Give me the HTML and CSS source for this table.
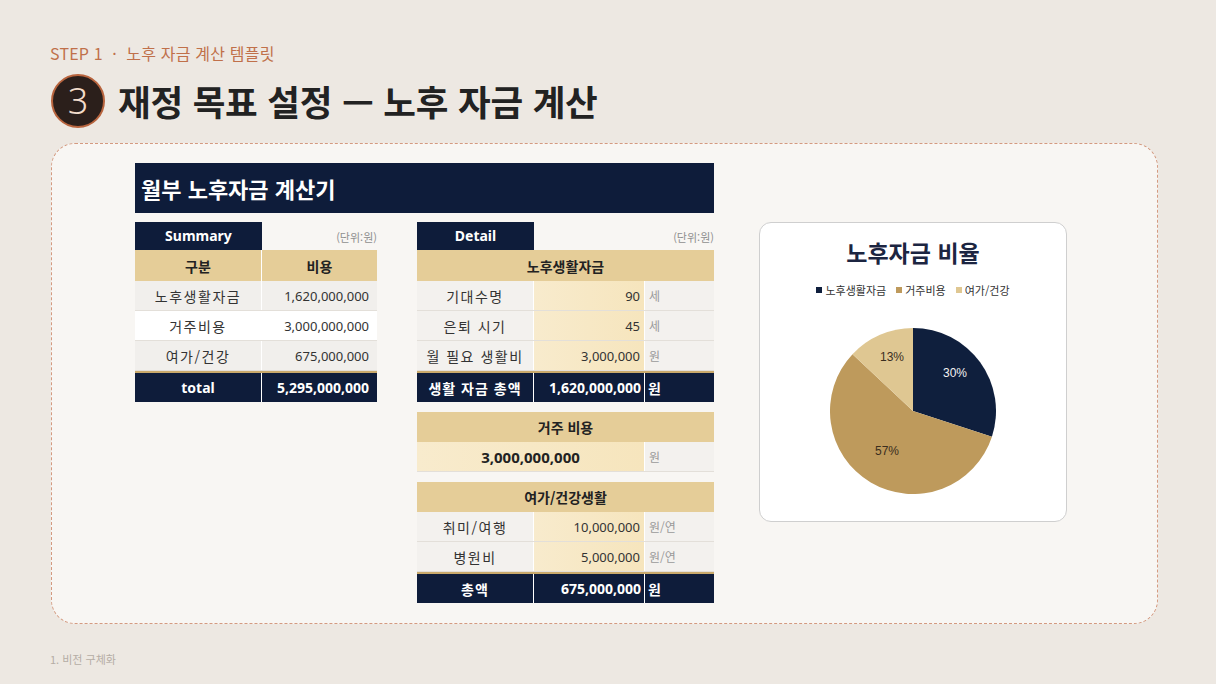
FILE: index.html
```html
<!DOCTYPE html>
<html lang="ko">
<head>
<meta charset="utf-8">
<title>노후 자금 계산</title>
<link rel="stylesheet" href="styles.css">
</head>
<body>
<div class="page">
  <div class="step">STEP 1 &nbsp;·&nbsp; 노후 자금 계산 템플릿</div>
  <div class="title-row">
    <div class="circle">3</div>
    <h1 class="title">재정 목표 설정 — 노후 자금 계산</h1>
  </div>

  <div class="card">
    <div class="left">
      <div class="calc-title">월부 노후자금 계산기</div>
      <div class="tables">
        <div class="summary">
          <div class="tab-row"><div class="tab">Summary</div><div class="unit-note">(단위:원)</div></div>
          <div class="s-grid s-head"><div>구분</div><div>비용</div></div>
          <div class="s-grid s-row odd"><div class="lbl">노후생활자금</div><div class="val">1,620,000,000</div></div>
          <div class="s-grid s-row even"><div class="lbl">거주비용</div><div class="val">3,000,000,000</div></div>
          <div class="s-grid s-row odd"><div class="lbl">여가/건강</div><div class="val">675,000,000</div></div>
          <div class="s-grid s-total"><div>total</div><div class="val">5,295,000,000</div></div>
        </div>

        <div class="detail">
          <div class="tab-row"><div class="tab">Detail</div><div class="unit-note">(단위:원)</div></div>
          <div class="block">
            <div class="d-head first">노후생활자금</div>
            <div class="d-grid d-row"><div class="lbl">기대수명</div><div class="val">90</div><div class="unit">세</div></div>
            <div class="d-grid d-row"><div class="lbl">은퇴 시기</div><div class="val">45</div><div class="unit">세</div></div>
            <div class="d-grid d-row"><div class="lbl">월 필요 생활비</div><div class="val">3,000,000</div><div class="unit">원</div></div>
            <div class="d-grid d-total"><div class="lbl">생활 자금 총액</div><div class="val">1,620,000,000</div><div class="unit">원</div></div>
          </div>
          <div class="block">
            <div class="d-head">거주 비용</div>
            <div class="d-grid2 d-row"><div class="val big">3,000,000,000</div><div class="unit">원</div></div>
          </div>
          <div class="block">
            <div class="d-head">여가/건강생활</div>
            <div class="d-grid d-row"><div class="lbl">취미/여행</div><div class="val">10,000,000</div><div class="unit">원/연</div></div>
            <div class="d-grid d-row"><div class="lbl">병원비</div><div class="val">5,000,000</div><div class="unit">원/연</div></div>
            <div class="d-grid d-total"><div class="lbl">총액</div><div class="val">675,000,000</div><div class="unit">원</div></div>
          </div>
        </div>
      </div>
    </div>

    <div class="chart">
      <div class="chart-title">노후자금 비율</div>
      <div class="legend">
        <span class="lg"><i class="m m1"></i>노후생활자금</span>
        <span class="lg"><i class="m m2"></i>거주비용</span>
        <span class="lg"><i class="m m3"></i>여가/건강</span>
      </div>
      <svg class="pie" width="166" height="166" viewBox="0 0 166 166">
        <path d="M83 83 L83 0 A83 83 0 0 1 161.94 108.65 Z" fill="#0f1f3d"/>
        <path d="M83 83 L161.94 108.65 A83 83 0 1 1 22.5 26.2 Z" fill="#be9a5c"/>
        <path d="M83 83 L22.5 26.2 A83 83 0 0 1 83 0 Z" fill="#dfc792"/>
        <text x="125" y="49" class="pl light" text-anchor="middle">30%</text>
        <text x="57" y="127" class="pl" text-anchor="middle">57%</text>
        <text x="62" y="33" class="pl" text-anchor="middle">13%</text>
      </svg>
    </div>
  </div>

  <div class="footer">1. 비전 구체화</div>
</div>
</body>
</html>
```

FILE: styles.css
```css
* { box-sizing: border-box; }
html, body { margin: 0; padding: 0; }
body {
  width: 1216px;
  height: 684px;
  overflow: hidden;
  background: #ede8e2;
  font-family: "Noto Sans", "Noto Sans CJK KR", sans-serif;
  color: #333;
}
.page { padding: 43px 58px 0 51px; }
.step {
  font-family: "Noto Sans CJK KR", sans-serif;
  font-size: 16px;
  line-height: 20px;
  color: #c0704a;
  margin-left: -1px;
  letter-spacing: 0.2px;
}
.title-row {
  display: flex;
  align-items: center;
  gap: 13px;
  margin-top: 11px;
  height: 54px;
}
.circle {
  width: 54px;
  height: 54px;
  border-radius: 50%;
  background: #2b1f1b;
  border: 2px solid #b8643e;
  color: #f3dccb;
  font-family: "Noto Sans", sans-serif;
  font-weight: 300;
  font-size: 36px;
  display: flex;
  align-items: center;
  justify-content: center;
  line-height: 1;
}
.title {
  margin: 0;
  font-family: "Noto Sans CJK KR", sans-serif;
  font-size: 35.5px;
  font-weight: 700;
  line-height: 54px;
  color: #222;
  letter-spacing: -0.2px;
}
.card {
  margin-top: 15px;
  height: 481px;
  border: 1px dashed #d49a80;
  border-radius: 24px;
  background: #f8f6f3;
  padding: 19px 0 0 83px;
  display: flex;
}
.left { width: 579px; }
.calc-title {
  height: 50px;
  background: #0e1c3a;
  color: #fff;
  font-family: "Noto Sans CJK KR", sans-serif;
  font-weight: 700;
  font-size: 22px;
  padding-left: 6px;
  display: flex;
  align-items: center;
}
.tables {
  display: flex;
  gap: 40px;
  margin-top: 9px;
}
.summary { width: 242px; }
.detail { width: 297px; }
.tab-row {
  display: flex;
  justify-content: space-between;
  align-items: center;
  height: 28px;
}
.tab {
  width: 127px;
  height: 28px;
  background: #0e1c3a;
  color: #fff;
  font-weight: 700;
  font-size: 14px;
  line-height: 28px;
  text-align: center;
}
.detail .tab { width: 117px; }
.unit-note {
  font-family: "Noto Sans CJK KR", sans-serif;
  font-size: 11px;
  color: #8f8f8f;
  padding-top: 2px;
}

/* summary */
.s-grid {
  display: grid;
  grid-template-columns: 127px 115px;
}
.s-grid > div {
  display: flex;
  align-items: center;
  justify-content: center;
}
.s-grid > div:first-child { border-right: 1px solid #fff; }
.s-head {
  height: 31px;
  background: #e5cd98;
  font-weight: 700;
  font-size: 14px;
  color: #222;
  font-family: "Noto Sans CJK KR", sans-serif;
}
.s-row {
  height: 30px;
  border-bottom: 1px solid #e3dfd9;
}
.s-row.odd { background: #f1efec; }
.s-row.even { background: #fff; }
.lbl {
  font-family: "Noto Sans CJK KR", sans-serif;
  font-size: 14px;
  letter-spacing: 1.5px;
  color: #333;
}
.s-grid > .val, .d-grid > .val {
  justify-content: flex-end;
  font-size: 13px;
  color: #333;
}
.s-grid > .val { padding-right: 8px; }
.s-total {
  height: 31px;
  background: #0e1c3a;
  border-top: 2px solid #c9a96b;
  color: #fff;
  font-weight: 700;
  font-size: 14px;
}
.s-total > .val, .d-total > .val { font-size: 14px !important; color: #fff !important; font-weight: 700; }

/* detail */
.block + .block { margin-top: 10px; }
.d-head {
  height: 30px;
  background: #e5cd98;
  font-family: "Noto Sans CJK KR", sans-serif;
  font-weight: 700;
  font-size: 14px;
  color: #222;
  display: flex;
  align-items: center;
  justify-content: center;
}
.d-head.first { height: 31px; }
.d-grid {
  display: grid;
  grid-template-columns: 117px 111px 69px;
}
.d-grid2 {
  display: grid;
  grid-template-columns: 228px 69px;
}
.d-grid > div, .d-grid2 > div {
  display: flex;
  align-items: center;
}
.d-row {
  height: 30px;
  border-bottom: 1px solid #e3dfd9;
}
.d-row .lbl {
  justify-content: center;
  background: #f3f1ee;
  border-right: 1px solid #fff;
}
.d-row .val {
  background: linear-gradient(90deg, #f8ebcd, #f6e5bd);
  padding-right: 4px;
  border-right: 1px solid #fff;
}
.d-row .unit {
  background: #f3f1ee;
  padding-left: 4px;
  font-family: "Noto Sans CJK KR", sans-serif;
  font-size: 12px;
  color: #9a9a9a;
}
.d-row .val.big {
  justify-content: center;
  font-weight: 700;
  font-size: 15px;
  color: #222;
  padding-right: 0;
}
.d-total {
  height: 31px;
  background: #0e1c3a;
  border-top: 2px solid #c9a96b;
  color: #fff;
}
.d-total .lbl {
  justify-content: center;
  color: #fff;
  font-weight: 700;
  letter-spacing: 1px;
  border-right: 1px solid #fff;
}
.d-total .val {
  padding-right: 3px;
  border-right: 1px solid #fff;
}
.d-total .unit {
  padding-left: 3px;
  font-family: "Noto Sans CJK KR", sans-serif;
  font-weight: 700;
  font-size: 14px;
}

/* chart */
.chart {
  margin-left: 45px;
  margin-top: 59px;
  width: 308px;
  height: 300px;
  background: #fff;
  border: 1px solid #cfcfcf;
  border-radius: 12px;
  display: flex;
  flex-direction: column;
  align-items: center;
}
.chart-title {
  margin-top: 13px;
  line-height: 32px;
  font-family: "Noto Sans CJK KR", sans-serif;
  font-weight: 700;
  font-size: 23px;
  color: #1c2541;
}
.legend {
  margin-top: 14px;
  line-height: 16px;
  font-family: "Noto Sans CJK KR", sans-serif;
  font-size: 11px;
  color: #333;
  display: flex;
  gap: 10px;
}
.lg { display: flex; align-items: center; }
.m {
  display: inline-block;
  width: 6px;
  height: 6px;
  margin-right: 3px;
}
.m1 { background: #0f1f3d; }
.m2 { background: #be9a5c; }
.m3 { background: #dfc792; }
.pie { margin-top: 30px; display: block; }
.pl {
  font-family: "Liberation Sans", Arial, sans-serif;
  font-size: 12px;
  fill: #3a2e1e;
}
.pl.light { fill: #f2f2f2; }

.footer {
  margin-top: 27px;
  margin-left: -1px;
  font-family: "Noto Sans CJK KR", sans-serif;
  font-size: 11px;
  line-height: 16px;
  color: #b5ada5;
}
```
